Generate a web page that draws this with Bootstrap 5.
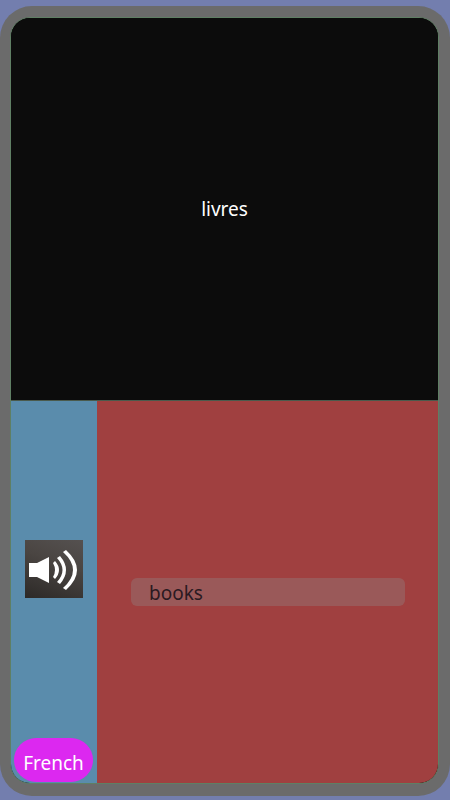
<!DOCTYPE html>
<html lang="en">
<head>
  <meta charset="UTF-8">
  <title>Flashcard</title>
  <link href="https://cdn.jsdelivr.net/npm/bootstrap@5.3.3/dist/css/bootstrap.min.css" rel="stylesheet">
  <style>
    body {
      background: #737eae;
      height: 800px;
      overflow: hidden;
      font-family: "Noto Sans", sans-serif;
    }

    .phone-shell {
      margin-top: 6px;
      height: 790px;
      width: 450px;
      background: #6b6b6b;
      border-radius: 32px;
      padding: 11px 11px 12px 10px;
    }

    .phone-screen {
      height: 100%;
      border: 1px solid #5f7f64;
      border-radius: 20px;
      overflow: hidden;
      background: #0c0c0c;
    }

    .word-panel {
      height: 382px;
      flex: none;
      background: #0c0c0c;
      color: #fff;
      font-size: 19px;
    }

    .answer-panel {
      height: 383px;
      flex: none;
      border-top: 1px solid #4a5a4c;
    }

    .audio-col {
      width: 86px;
      background: #5a8cac;
      padding-bottom: 47px;
    }

    .audio-btn {
      width: 58px;
      height: 58px;
      background: linear-gradient(20deg, #2c2927, #4a4542 60%, #555150);
      margin-left: -1px;
    }

    .audio-btn svg {
      display: block;
      filter: blur(0.4px);
    }

    .lang-pill {
      position: absolute;
      left: 3px;
      bottom: 1px;
      width: 79px;
      height: 44px;
      padding-top: 6px;
      border-radius: 22px;
      background: #dc28f0;
      color: #fff;
      font-size: 19px;
    }

    .answer-col {
      background: #a04040;
      padding: 0 33px 1px 34px;
    }

    .answer-field {
      height: 28px;
      width: 100%;
      background: rgba(144, 144, 144, 0.32);
      border-radius: 6px;
      padding: 3px 0 0 18px;
      color: #2a1a22;
      font-size: 19px;
    }
  </style>
</head>
<body>

  <div class="phone-shell">
    <div class="phone-screen d-flex flex-column">
      <div class="word-panel d-flex align-items-center justify-content-center">livres</div>
      <div class="answer-panel d-flex">
        <div class="audio-col position-relative d-flex align-items-center justify-content-center">
          <div class="audio-btn">
            <svg width="58" height="58" viewBox="0 0 58 58" fill="#fff">
              <path d="M4 23h8l12-6v26l-12-6H4z"/>
              <path d="M30 21q8 9 0 18l-2-2q4-7 0-14z"/>
              <path d="M35 16q12 14 0 28l-3-2q11-12 0-24z"/>
              <path d="M41 10q22 20 0 40l-3-2q20-18 0-36z"/>
            </svg>
          </div>
          <div class="lang-pill d-flex align-items-center justify-content-center">French</div>
        </div>
        <div class="answer-col flex-grow-1 d-flex align-items-center">
          <div class="answer-field d-flex align-items-center">books</div>
        </div>
      </div>
    </div>
  </div>

  <script src="https://cdn.jsdelivr.net/npm/bootstrap@5.3.3/dist/js/bootstrap.bundle.min.js"></script>
</body>
</html>
